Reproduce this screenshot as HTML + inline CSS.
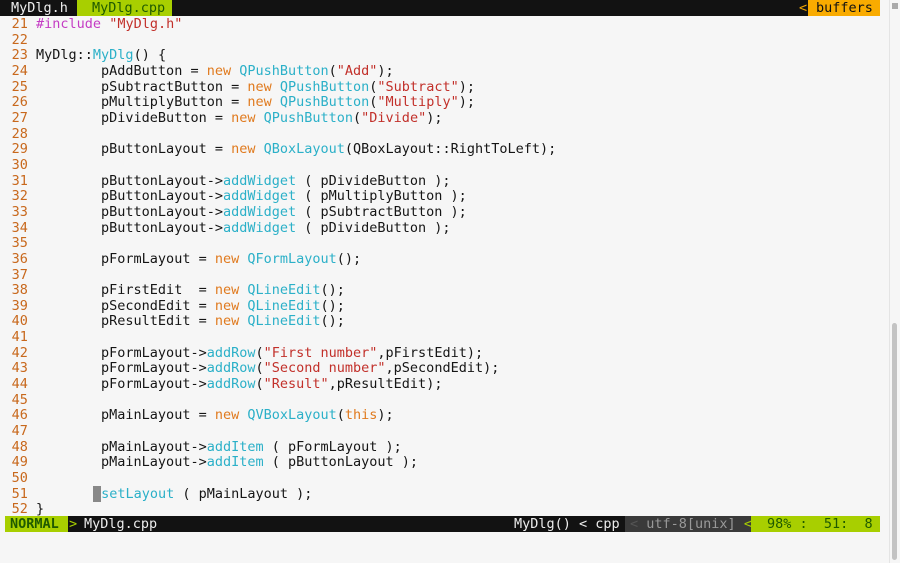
<!DOCTYPE html>
<html><head><meta charset="utf-8"><style>
body{margin:0;width:900px;height:563px;background:#f6f6f6;overflow:hidden;position:relative;font-family:"DejaVu Sans Mono","Liberation Mono",monospace;font-size:13.5px;color:#151515}
.bar{position:absolute;left:0;height:16px;line-height:16px;white-space:pre}
.bar span{position:absolute;top:0;height:16px}
.bar span span{position:static}
pre{position:absolute;left:3.5px;top:17px;margin:0;font:inherit;line-height:15.65px}
.n{color:#c8681c}.k{color:#e07a1e}.t{color:#2bb0c8}.s{color:#c2302a}.p{color:#c43cc4}
.cur{background:#888;color:#888}
</style></head><body>
<div class="bar" style="top:0;width:880px;background:#121212;color:#eee"><span style="left:11px">MyDlg.h</span><span style="left:77px;width:95px;background:#a8cf00;color:#1f5a00;padding-left:15px;box-sizing:border-box">MyDlg.cpp</span><span style="left:799px;color:#f0a400">&lt;</span><span style="left:808px;width:72px;background:#f9ab00;color:#111;padding-left:8px;box-sizing:border-box">buffers</span></div>
<pre><span class="n"> 21</span> <span class="p">#include</span> <span class="s">"MyDlg.h"</span>
<span class="n"> 22</span>
<span class="n"> 23</span> MyDlg::<span class="t">MyDlg</span>() {
<span class="n"> 24</span>         pAddButton = <span class="k">new</span> <span class="t">QPushButton</span>(<span class="s">"Add"</span>);
<span class="n"> 25</span>         pSubtractButton = <span class="k">new</span> <span class="t">QPushButton</span>(<span class="s">"Subtract"</span>);
<span class="n"> 26</span>         pMultiplyButton = <span class="k">new</span> <span class="t">QPushButton</span>(<span class="s">"Multiply"</span>);
<span class="n"> 27</span>         pDivideButton = <span class="k">new</span> <span class="t">QPushButton</span>(<span class="s">"Divide"</span>);
<span class="n"> 28</span>
<span class="n"> 29</span>         pButtonLayout = <span class="k">new</span> <span class="t">QBoxLayout</span>(QBoxLayout::RightToLeft);
<span class="n"> 30</span>
<span class="n"> 31</span>         pButtonLayout-&gt;<span class="t">addWidget</span> ( pDivideButton );
<span class="n"> 32</span>         pButtonLayout-&gt;<span class="t">addWidget</span> ( pMultiplyButton );
<span class="n"> 33</span>         pButtonLayout-&gt;<span class="t">addWidget</span> ( pSubtractButton );
<span class="n"> 34</span>         pButtonLayout-&gt;<span class="t">addWidget</span> ( pDivideButton );
<span class="n"> 35</span>
<span class="n"> 36</span>         pFormLayout = <span class="k">new</span> <span class="t">QFormLayout</span>();
<span class="n"> 37</span>
<span class="n"> 38</span>         pFirstEdit  = <span class="k">new</span> <span class="t">QLineEdit</span>();
<span class="n"> 39</span>         pSecondEdit = <span class="k">new</span> <span class="t">QLineEdit</span>();
<span class="n"> 40</span>         pResultEdit = <span class="k">new</span> <span class="t">QLineEdit</span>();
<span class="n"> 41</span>
<span class="n"> 42</span>         pFormLayout-&gt;<span class="t">addRow</span>(<span class="s">"First number"</span>,pFirstEdit);
<span class="n"> 43</span>         pFormLayout-&gt;<span class="t">addRow</span>(<span class="s">"Second number"</span>,pSecondEdit);
<span class="n"> 44</span>         pFormLayout-&gt;<span class="t">addRow</span>(<span class="s">"Result"</span>,pResultEdit);
<span class="n"> 45</span>
<span class="n"> 46</span>         pMainLayout = <span class="k">new</span> <span class="t">QVBoxLayout</span>(<span class="k">this</span>);
<span class="n"> 47</span>
<span class="n"> 48</span>         pMainLayout-&gt;<span class="t">addItem</span> ( pFormLayout );
<span class="n"> 49</span>         pMainLayout-&gt;<span class="t">addItem</span> ( pButtonLayout );
<span class="n"> 50</span>
<span class="n"> 51</span>        <span class="cur"> </span><span class="t">setLayout</span> ( pMainLayout );
<span class="n"> 52</span> }</pre>
<div class="bar" style="top:516px;left:5px;width:875px;background:#121212;color:#eee"><span style="left:0;width:63px;background:#a8cf00;color:#1f5a00;font-weight:bold;padding-left:5px;box-sizing:border-box">NORMAL</span><span style="left:64px;color:#a8cf00">&gt;</span><span style="left:79px">MyDlg.cpp</span><span style="left:509px">MyDlg() &lt; cpp</span><span style="left:620px;width:126px;background:#3a3a3a;color:#999"><span style="color:#555;margin-left:5px">&lt;</span> utf-8[unix] <span style="color:#a8cf00">&lt;</span></span><span style="left:746px;width:129px;background:#a8cf00;color:#1f5a00;padding-left:16px;box-sizing:border-box">98% :  51:  8</span></div>
<div style="position:absolute;left:889px;top:0;width:1px;height:563px;background:#e4e4e4"></div>
<div style="position:absolute;left:892px;top:3px;width:6px;height:6px;background:#aaa"></div>
<div style="position:absolute;left:892px;top:323px;width:5px;height:237px;background:#c3c3c3;border-radius:3px"></div>
</body></html>
